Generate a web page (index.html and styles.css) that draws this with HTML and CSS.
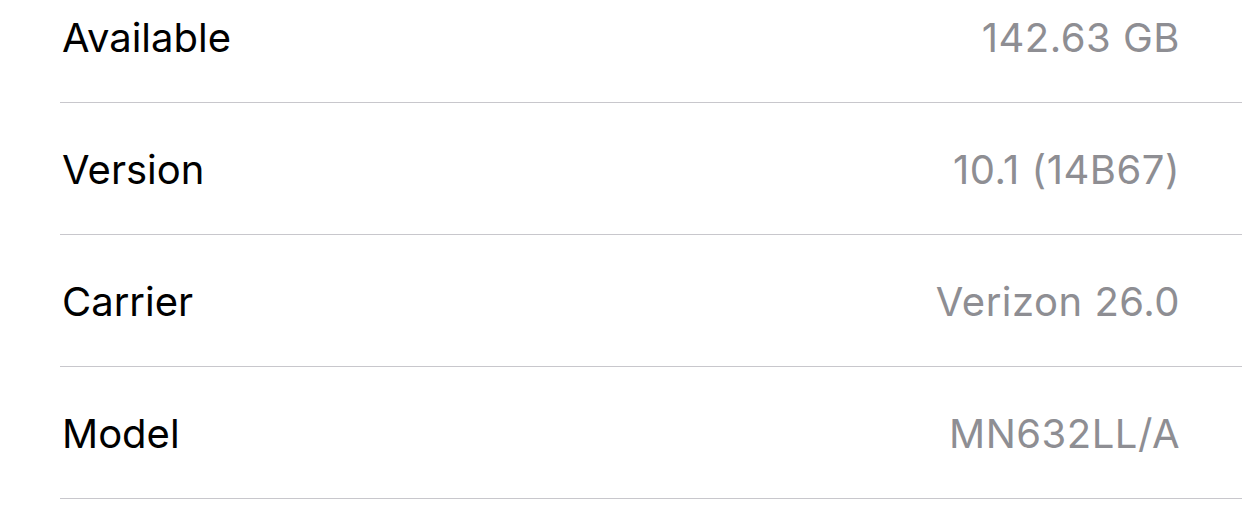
FILE: index.html
```html
<!DOCTYPE html>
<html>
<head>
<meta charset="utf-8">
<link rel="stylesheet" href="styles.css">
</head>
<body>
<div class="list">
  <div class="row"><span class="label">Available</span><span class="value">142.63 GB</span></div>
  <div class="row"><span class="label">Version</span><span class="value">10.1 (14B67)</span></div>
  <div class="row"><span class="label">Carrier</span><span class="value">Verizon 26.0</span></div>
  <div class="row"><span class="label">Model</span><span class="value">MN632LL/A</span></div>
</div>
</body>
</html>
```

FILE: styles.css
```css
html, body {
  margin: 0;
  background: #ffffff;
  overflow: hidden;
}
.list {
  margin-top: -29px;
  padding-left: 60px;
  font-family: Inter, "Noto Sans", sans-serif;
}
.row {
  height: 131px;
  border-bottom: 1px solid #c8c7cc;
  display: flex;
  align-items: center;
  justify-content: space-between;
  padding: 0 62px 0 2px;
  font-size: 40px;
}
.label {
  color: #000000;
  padding-top: 2px;
}
.value {
  color: #8e8e93;
  letter-spacing: 0.5px;
  padding-top: 2px;
}
```
